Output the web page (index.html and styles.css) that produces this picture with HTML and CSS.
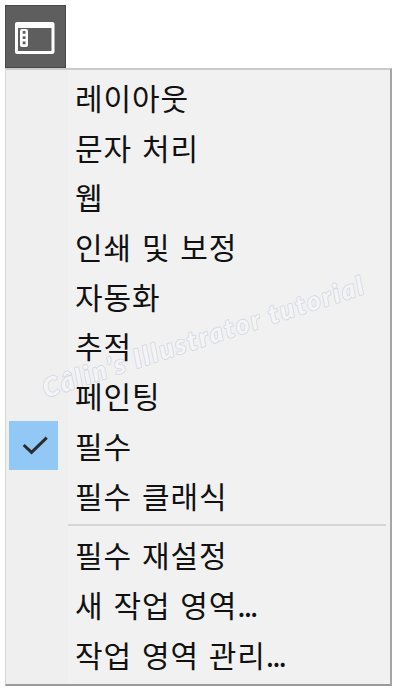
FILE: index.html
```html
<!DOCTYPE html>
<html lang="ko">
	<head>
		<meta charset="UTF-8" />
		<title>작업 영역</title>
		<link rel="stylesheet" href="styles.css">
	</head>
	<body>
		<button class="switcher">
			<svg width="40" height="34" viewBox="0 0 40 34">
				<path fill="#fff" fill-rule="evenodd" d="M2 0H37.5Q39.5 0 39.5 2V30Q39.5 32 37.5 32H2Q0 32 0 30V2Q0 0 2 0ZM3 6V29H36.5V6Z" />
				<rect x="5" y="7" width="8" height="18" rx="2" fill="#fff" />
				<path fill="#5e5e5e" d="M7.7 9h2.8v2.8h-2.8zM7.7 14.3h2.8v2.8h-2.8zM7.7 19.5h2.8v2.8h-2.8z" />
			</svg>
		</button>
		<div class="menu">
			<ul class="list">
				<li class="item">레이아웃</li>
				<li class="item">문자 처리</li>
				<li class="item">웹</li>
				<li class="item">인쇄 및 보정</li>
				<li class="item">자동화</li>
				<li class="item">추적</li>
				<li class="item">페인팅</li>
				<li class="item checked">
					<span class="check">
						<svg width="50" height="50" viewBox="0 0 50 50">
							<path d="M14.5 24.5L22.5 32L38 17" fill="none" stroke="#2b2b2b" stroke-width="3" />
						</svg>
					</span>
					필수
				</li>
				<li class="item">필수 클래식</li>
			</ul>
			<div class="line"></div>
			<ul class="list">
				<li class="item">필수 재설정</li>
				<li class="item">새 작업 영역<span class="dots">...</span></li>
				<li class="item">작업 영역 관리<span class="dots">...</span></li>
			</ul>
		</div>
		<svg class="watermark" width="400" height="688" viewBox="0 0 400 688">
			<text transform="translate(46 398) rotate(-18.1)" textLength="336" lengthAdjust="spacing">Câlin’s Illustrator tutorial</text>
		</svg>
	</body>
</html>
```

FILE: styles.css
```css
body {
	position: relative;
	margin: 0;
	padding: 5px 0 0 5px;
	height: 683px;
	overflow: hidden;
	background: #fff;
	font-family: "Noto Sans CJK KR", sans-serif;
}

.switcher {
	display: flex;
	width: 61px;
	height: 63px;
	padding: 16px 0 0 9px;
	border: 1px solid #484848;
	box-sizing: border-box;
	background: #5e5e5e;
}
.switcher svg {
	flex: none;
}

.menu {
	width: 387px;
	height: 618px;
	box-sizing: border-box;
	border: 1px solid #d6d6d6;
	border-top: 2px solid #cbcbcb;
	border-right: 2px solid #a5a5a5;
	border-bottom: 2px solid #9a9a9a;
	padding-top: 3px;
	background: linear-gradient(to right, #efefef 62px, #f1f1f1 62px);
}

.list {
	position: relative;
	z-index: 1;
	margin: 0;
	padding: 0;
	list-style: none;
}
.item {
	height: 49.7px;
	padding-left: 69px;
	font-size: 30px;
	line-height: 49px;
	letter-spacing: 0.9px;
	word-spacing: 0.6px;
	white-space: nowrap;
	color: #111;
}
.checked {
	display: flex;
	padding-left: 3px;
}
.check {
	width: 49px;
	height: 49px;
	margin-right: 17px;
	background: #91c8f6;
}
.check svg {
	display: block;
	height: 49px;
}
.dots {
	letter-spacing: -2px;
}

.line {
	height: 2px;
	margin: 4px 4px 4px 62px;
	background: #d5d5d5;
}

/* slanted outline text, under the item labels */
.watermark {
	position: absolute;
	left: 0;
	top: 0;
	pointer-events: none;
}
.watermark text {
	font-family: "Lato", sans-serif;
	font-size: 26px;
	font-style: italic;
	font-weight: 900;
	fill: #f4f4f6;
	stroke: #d2d6e3;
	stroke-width: 1.6px;
	stroke-linejoin: round;
	paint-order: stroke;
}
```
